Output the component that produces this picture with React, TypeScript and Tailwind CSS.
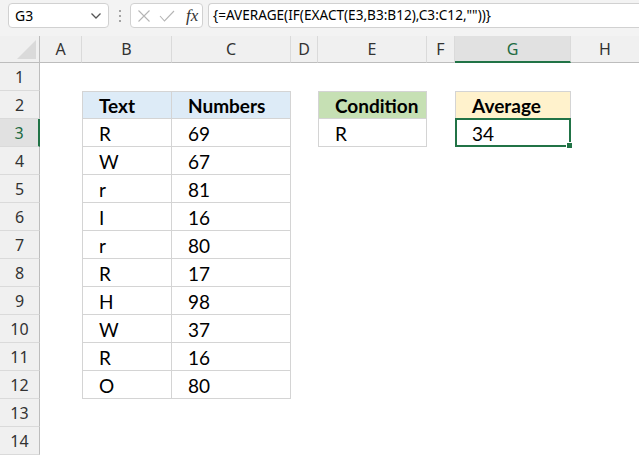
import React from "react";

const data: [string, string][] = [
  ["R", "69"],
  ["W", "67"],
  ["r", "81"],
  ["I", "16"],
  ["r", "80"],
  ["R", "17"],
  ["H", "98"],
  ["W", "37"],
  ["R", "16"],
  ["O", "80"],
];

const letters = ["A", "B", "C", "D", "E", "F", "G", "H"];

const cellFont = { fontFamily: "Lato, 'Open Sans', sans-serif" } as const;
const uiFont = { fontFamily: "'Noto Sans', 'Open Sans', sans-serif" } as const;

function Cell({
  text,
  bold,
  bg,
  borderCls,
  children,
}: {
  text?: string;
  bold?: boolean;
  bg?: string;
  borderCls?: string;
  children?: React.ReactNode;
}) {
  return (
    <div
      className={`relative flex items-end pl-[16px] pb-[1px] text-[19px] leading-[22px] text-black ${bold ? "font-bold" : ""} ${bg ?? "bg-white"} ${borderCls ?? ""}`}
      style={cellFont}
    >
      {text}
      {children}
    </div>
  );
}

export default function App() {
  const rows: React.ReactNode[] = [];
  for (let r = 1; r <= 14; r++) {
    const selRow = r === 3;
    rows.push(
      <div
        key={`rh${r}`}
        className={`flex items-center justify-center text-[16px] ${
          selRow
            ? "bg-[#e1e1e1] text-[#1e6b41] border-r-2 border-r-[#217346]"
            : "bg-[#f0f0f0] text-[#333] border-r border-r-[#bdbdbd]"
        } border-b border-b-[#dadada]`}
        style={uiFont}
      >
        {r}
      </div>
    );
    rows.push(<div key={`a${r}`} className="bg-white" />);
    if (r === 2) {
      rows.push(
        <Cell key={`b${r}`} text="Text" bold bg="bg-[#ddebf7]" borderCls="border border-[#d4d4d4]" />
      );
      rows.push(
        <Cell key={`c${r}`} text="Numbers" bold bg="bg-[#ddebf7]" borderCls="border-y border-r border-[#d4d4d4]" />
      );
    } else if (r >= 3 && r <= 12) {
      const [t, n] = data[r - 3];
      rows.push(<Cell key={`b${r}`} text={t} borderCls="border-x border-b border-[#d4d4d4]" />);
      rows.push(<Cell key={`c${r}`} text={n} borderCls="border-r border-b border-[#d4d4d4]" />);
    } else {
      rows.push(<div key={`b${r}`} className="bg-white" />);
      rows.push(<div key={`c${r}`} className="bg-white" />);
    }
    rows.push(<div key={`d${r}`} className="bg-white" />);
    if (r === 2) {
      rows.push(
        <Cell key={`e${r}`} text="Condition" bold bg="bg-[#c6e0b4]" borderCls="border border-[#d4d4d4]" />
      );
    } else if (r === 3) {
      rows.push(<Cell key={`e${r}`} text="R" borderCls="border-x border-b border-[#d4d4d4]" />);
    } else {
      rows.push(<div key={`e${r}`} className="bg-white" />);
    }
    rows.push(<div key={`f${r}`} className="bg-white" />);
    if (r === 2) {
      rows.push(
        <Cell key={`g${r}`} text="Average" bold bg="bg-[#fff2cc]" borderCls="border border-[#d4d4d4]" />
      );
    } else if (r === 3) {
      rows.push(
        <Cell key={`g${r}`} text="34" borderCls="border-x border-b border-[#d4d4d4]">
          <div className="absolute -left-[1px] -top-[1px] -right-[1px] -bottom-[1px] border-2 border-[#217346]" />
          <div className="absolute -right-[3px] -bottom-[3px] w-[5px] h-[5px] bg-[#217346] border border-white box-content" />
        </Cell>
      );
    } else {
      rows.push(<div key={`g${r}`} className="bg-white" />);
    }
    rows.push(<div key={`h${r}`} className="bg-white" />);
  }

  return (
    <div className="w-[639px] h-[458px] overflow-hidden bg-white" style={uiFont}>
      {/* Formula bar */}
      <div className="h-[36px] bg-[#f3f3f3] flex items-start pt-[3px]">
        <div className="ml-[8px] w-[101px] h-[25px] bg-white border border-[#d1d1d1] rounded-[4px] flex items-center justify-between pl-[6px] pr-[6px] text-[14px] text-black">
          <span>G3</span>
          <svg width="12" height="8" viewBox="0 0 12 8" fill="none">
            <path d="M1.5 1.5 L6 6 L10.5 1.5" stroke="#555" strokeWidth="1.3" />
          </svg>
        </div>
        <div className="w-[21px] h-[25px] flex flex-col items-center justify-center gap-[3px]">
          <span className="w-[2px] h-[2px] bg-[#8a8a8a] rounded-full" />
          <span className="w-[2px] h-[2px] bg-[#8a8a8a] rounded-full" />
          <span className="w-[2px] h-[2px] bg-[#8a8a8a] rounded-full" />
        </div>
        <div className="w-[73px] h-[25px] bg-white border border-[#d1d1d1] rounded-[4px] flex items-center pl-[6px] gap-[8px]">
          <svg width="14" height="14" viewBox="0 0 14 14" fill="none">
            <path d="M1.5 1.5 L12.5 12.5 M12.5 1.5 L1.5 12.5" stroke="#b5b5b5" strokeWidth="1.1" />
          </svg>
          <svg width="16" height="14" viewBox="0 0 16 14" fill="none">
            <path d="M1 7 L5.5 12 L15 2" stroke="#b5b5b5" strokeWidth="1.1" />
          </svg>
          <span
            className="italic text-[17px] leading-none text-[#333] ml-[3px]"
            style={{ fontFamily: "'Liberation Serif', 'DejaVu Serif', serif" }}
          >
            fx
          </span>
        </div>
        <div className="ml-[5px] flex-1 h-[25px] bg-white border border-r-0 border-[#d1d1d1] rounded-l-[4px] flex items-center pl-[4px] text-[13.6px] text-black whitespace-nowrap">
          {'{=AVERAGE(IF(EXACT(E3,B3:B12),C3:C12,""))}'}
        </div>
      </div>

      {/* Grid */}
      <div className="grid grid-cols-[40px_42px_90px_119px_27px_109px_28px_116px_1fr] grid-rows-[27px_repeat(14,28px)]">
        <div className="bg-[#f0f0f0] border-r border-b border-[#bdbdbd] relative">
          <svg className="absolute left-[17px] top-[4px]" width="19" height="19" viewBox="0 0 19 19">
            <polygon points="19,0 19,19 0,19" fill="#dadada" />
          </svg>
        </div>
        {letters.map((l) => {
          const sel = l === "G";
          return (
            <div
              key={l}
              className={`flex items-center justify-center text-[16px] ${
                sel
                  ? "bg-[#e1e1e1] text-[#1e6b41] border-b-2 border-b-[#217346]"
                  : "bg-[#f0f0f0] text-[#333] border-b border-b-[#bdbdbd]"
              } ${l !== "H" ? "border-r border-r-[#dadada]" : ""}`}
            >
              {l}
            </div>
          );
        })}
        {rows}
      </div>
    </div>
  );
}
